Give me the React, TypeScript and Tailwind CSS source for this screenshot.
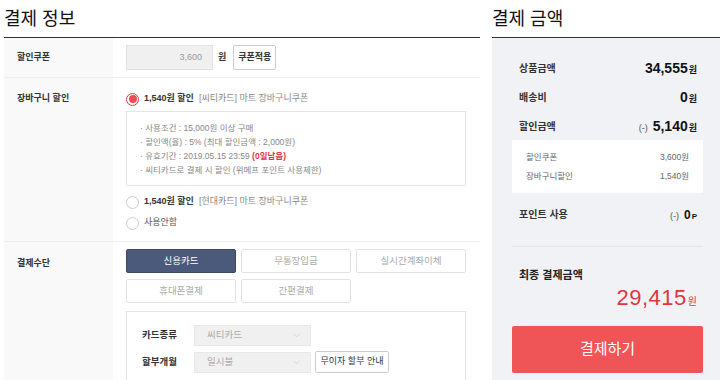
import { ChevronDown } from "lucide-react";

const font = "font-['Liberation_Sans','Noto_Sans_CJK_KR',sans-serif]";

const Radio = ({ checked }: { checked?: boolean }) => (
  <span
    className={`flex h-[13px] w-[13px] shrink-0 items-center justify-center rounded-full border bg-white ${
      checked ? "border-[#e4343d]" : "border-[#ccc]"
    }`}
  >
    {checked && <span className="h-[8px] w-[8px] rounded-full bg-[#ec4d54]" />}
  </span>
);

const Label = ({ children }: { children: React.ReactNode }) => (
  <div className="w-[109px] shrink-0 bg-[#f9f9f9] pl-[13px] text-[9px] font-bold text-[#333]">
    {children}
  </div>
);

const PayBtn = ({ label, active }: { label: string; active?: boolean }) => (
  <div
    className={`flex h-[24px] w-[110px] items-center justify-center rounded-[2px] border text-[9.5px] ${
      active
        ? "border-[#3b4763] bg-[#4b5a7a] text-white"
        : "border-[#e2e2e2] bg-white text-[#aaa]"
    }`}
  >
    {label}
  </div>
);

const Select = ({ value }: { value: string }) => (
  <div className="flex h-[21px] w-[117px] items-center justify-between border border-[#e8e8e8] bg-[#f0f0f0] pl-[12px] pr-[8px] text-[9.5px] text-[#aaa]">
    <span>{value}</span>
    <ChevronDown size={11} strokeWidth={1} color="#bbb" />
  </div>
);

const SumRow = ({
  label,
  children,
}: {
  label: string;
  children: React.ReactNode;
}) => (
  <div className="flex h-[29px] items-center justify-between pl-[7px] pr-[6px]">
    <span className="text-[10px] font-bold text-[#333]">{label}</span>
    <span className="flex items-baseline text-[#111]">{children}</span>
  </div>
);

export default function App() {
  return (
    <div className={`flex h-[380px] w-[720px] overflow-hidden bg-white ${font}`}>
      {/* 결제 정보 */}
      <div className="ml-[4px] flex w-[476px] shrink-0 flex-col">
        <div className="h-[38px] shrink-0 border-b border-[#333] pt-[7px] text-[18px] leading-[24px] text-[#111]">
          결제 정보
        </div>

        <div className="flex h-[40px] shrink-0 border-b border-[#eee]">
          <Label>
            <div className="pt-[13px]">할인쿠폰</div>
          </Label>
          <div className="flex items-center pl-[13px]">
            <div className="flex h-[25px] w-[87px] items-center justify-end border border-[#e2e2e2] bg-[#f0f0f0] pr-[10px] text-[9px] text-[#999]">
              3,600
            </div>
            <span className="ml-[5px] text-[9px] font-bold text-[#333]">원</span>
            <div className="ml-[7px] flex h-[25px] w-[43px] items-center justify-center rounded-[2px] border border-[#ccc] bg-white text-[9px] font-bold text-[#333]">
              쿠폰적용
            </div>
          </div>
        </div>

        <div className="flex h-[164px] shrink-0 border-b border-[#eee]">
          <Label>
            <div className="pt-[14px]">장바구니 할인</div>
          </Label>
          <div className="flex flex-col pl-[13px] pt-[14px]">
            <div className="flex h-[14px] items-center gap-[5px] text-[9px]">
              <Radio checked />
              <span className="font-bold text-[#333]">1,540원 할인</span>
              <span className="text-[#888]">[씨티카드] 마트 장바구니쿠폰</span>
            </div>
            <div className="mt-[5px] h-[75px] w-[340px] border border-[#e5e5e5] pl-[13px] pt-[9px] text-[8.5px] leading-[14px] text-[#888]">
              <div>· 사용조건 : 15,000원 이상 구매</div>
              <div>· 할인액(율) : 5% (최대 할인금액 : 2,000원)</div>
              <div>
                · 유효기간 : 2019.05.15 23:59{" "}
                <span className="font-bold text-[#e4343d]">(0일남음)</span>
              </div>
              <div>· 씨티카드로 결제 시 할인 (위메프 포인트 사용제한)</div>
            </div>
            <div className="mt-[9px] flex h-[14px] items-center gap-[5px] text-[9px]">
              <Radio />
              <span className="font-bold text-[#333]">1,540원 할인</span>
              <span className="text-[#888]">[현대카드] 마트 장바구니쿠폰</span>
            </div>
            <div className="mt-[7px] flex h-[14px] items-center gap-[5px] text-[9px]">
              <Radio />
              <span className="text-[#555]">사용안함</span>
            </div>
          </div>
        </div>

        <div className="flex flex-1 shrink-0">
          <Label>
            <div className="pt-[15px]">결제수단</div>
          </Label>
          <div className="flex flex-col pl-[13px] pt-[7px]">
            <div className="flex gap-[5px]">
              <PayBtn label="신용카드" active />
              <PayBtn label="무통장입금" />
              <PayBtn label="실시간계좌이체" />
            </div>
            <div className="mt-[6px] flex gap-[5px]">
              <PayBtn label="휴대폰결제" />
              <PayBtn label="간편결제" />
            </div>
            <div className="mt-[8px] h-[80px] w-[340px] shrink-0 border border-[#e5e5e5] pl-[15px] pt-[13px]">
              <div className="flex items-center">
                <span className="w-[52px] text-[9.5px] font-bold text-[#333]">카드종류</span>
                <Select value="씨티카드" />
              </div>
              <div className="mt-[5px] flex items-center">
                <span className="w-[52px] text-[9.5px] font-bold text-[#333]">할부개월</span>
                <Select value="일시불" />
                <div className="ml-[4px] flex h-[22px] w-[74px] items-center justify-center rounded-[2px] border border-[#ccc] bg-white text-[9px] text-[#333]">
                  무이자 할부 안내
                </div>
              </div>
            </div>
          </div>
        </div>
      </div>

      {/* 결제 금액 */}
      <div className="ml-[12px] flex flex-1 flex-col">
        <div className="h-[38px] shrink-0 border-b border-[#333] pt-[7px] text-[18px] leading-[24px] text-[#111]">
          결제 금액
        </div>
        <div className="flex flex-1 flex-col bg-[#f1f2f6] pl-[20px] pr-[17px] pt-[16px]">
          <SumRow label="상품금액">
            <span className="text-[14px] font-bold">34,555</span>
            <span className="ml-[1px] text-[9px] font-bold">원</span>
          </SumRow>
          <SumRow label="배송비">
            <span className="text-[14px] font-bold">0</span>
            <span className="ml-[1px] text-[9px] font-bold">원</span>
          </SumRow>
          <SumRow label="할인금액">
            <span className="mr-[5px] text-[9px] text-[#555]">(-)</span>
            <span className="text-[14px] font-bold">5,140</span>
            <span className="ml-[1px] text-[9px] font-bold">원</span>
          </SumRow>
          <div className="mt-[-1px] flex h-[53px] shrink-0 flex-col bg-white pl-[14px] pr-[14px] pt-[8px] text-[8.5px] text-[#666]">
            <div className="flex h-[19px] items-center justify-between">
              <span>할인쿠폰</span>
              <span>3,600원</span>
            </div>
            <div className="flex h-[19px] items-center justify-between">
              <span>장바구니할인</span>
              <span>1,540원</span>
            </div>
          </div>
          <div className="mt-[7px]">
            <SumRow label="포인트 사용">
              <span className="mr-[5px] text-[9px] text-[#555]">(-)</span>
              <span className="text-[12px] font-bold">0</span>
              <span className="ml-[1px] text-[8px] font-bold">P</span>
            </SumRow>
          </div>
          <div className="mt-[17px] border-t border-[#e4e5ea]" />
          <div className="mt-[20px] pl-[7px] text-[11px] font-bold leading-[16px] text-[#222]">
            최종 결제금액
          </div>
          <div className="flex items-baseline justify-end pr-[6px] leading-[30px] text-[#e4343d]">
            <span className="text-[22px] tracking-[0.5px]">29,415</span>
            <span className="ml-[1px] text-[10px]">원</span>
          </div>
          <div className="mt-[9px] flex h-[47px] shrink-0 items-center justify-center rounded-[2px] bg-[#ef5457] text-[15px] text-white">
            결제하기
          </div>
        </div>
      </div>
    </div>
  );
}
